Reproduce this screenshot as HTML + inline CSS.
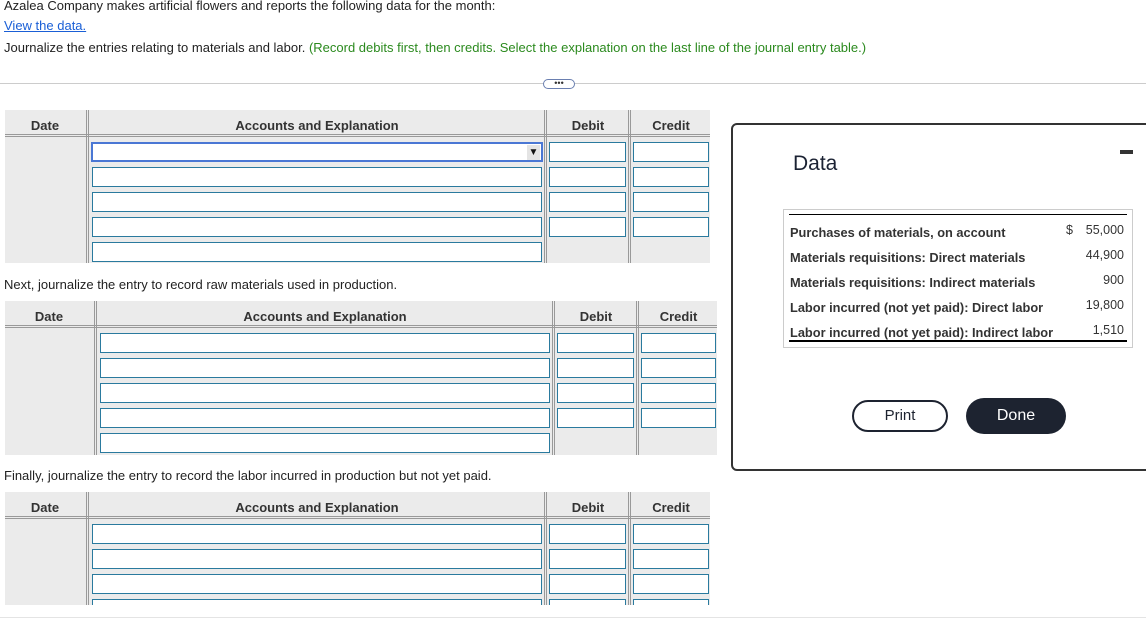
<!DOCTYPE html>
<html><head><style>
*{margin:0;padding:0;box-sizing:border-box}
body{width:1146px;height:619px;position:relative;overflow:hidden;background:#fff;font-family:"Liberation Sans",Arial,sans-serif;color:#222;font-size:13px}
.a{position:absolute}
.hd{position:absolute;background:#ebebeb}
.th{position:absolute;font-weight:bold;font-size:13px;color:#333;text-align:center}
.in{position:absolute;background:#fff;border:1px solid #2a7a9e;height:20px}
.vl{position:absolute;width:3px;border-left:1px solid #999;border-right:1px solid #999}
.hl{position:absolute;height:3px;border-top:1px solid #999;border-bottom:1px solid #999}
.dt{position:absolute;left:790px;font-weight:bold;font-size:12.8px;color:#333}
.dv{position:absolute;right:22px;font-size:12.5px;color:#333;text-align:right}
</style></head><body>
<div class="a" style="left:4px;top:-2px;font-size:13px">Azalea Company makes artificial flowers and reports the following data for the month:</div>
<div class="a" style="left:4px;top:18px;font-size:13px;color:#1a5fd6;text-decoration:underline">View the data.</div>
<div class="a" style="left:4px;top:40px;font-size:13px">Journalize the entries relating to materials and labor. <span style="color:#2b8a1e">(Record debits first, then credits. Select the explanation on the last line of the journal entry table.)</span></div>
<div class="a" style="left:0;top:83px;width:1146px;height:1px;background:#ccc"></div>
<div class="a" style="left:543px;top:79px;width:32px;height:10px;border:1px solid #6a7fb0;border-radius:5px;background:#fff;font-size:9px;line-height:6px;text-align:center;color:#333">•••</div>

<!-- Table 1 -->
<div class="hd" style="left:5px;top:110px;width:705px;height:153px"></div>
<div class="hl" style="left:5px;top:134px;width:705px"></div>
<div class="vl" style="left:86px;top:110px;height:153px"></div>
<div class="vl" style="left:544px;top:110px;height:153px"></div>
<div class="vl" style="left:628px;top:110px;height:153px"></div>
<div class="th" style="left:5px;top:118px;width:80px">Date</div>
<div class="th" style="left:90px;top:118px;width:454px">Accounts and Explanation</div>
<div class="th" style="left:548px;top:118px;width:80px">Debit</div>
<div class="th" style="left:632px;top:118px;width:78px">Credit</div>
<div class="in" style="left:91px;top:142px;width:452px;border:2px solid #4a77d4"></div>
<div class="a" style="left:527px;top:145px;width:13px;height:15px;background:#e4e4e4;font-size:10px;text-align:center;line-height:15px;color:#111">▼</div>
<div class="in" style="left:92px;top:167px;width:450px"></div>
<div class="in" style="left:92px;top:192px;width:450px"></div>
<div class="in" style="left:92px;top:217px;width:450px"></div>
<div class="in" style="left:92px;top:242px;width:450px"></div>
<div class="in" style="left:549px;top:142px;width:77px"></div>
<div class="in" style="left:549px;top:167px;width:77px"></div>
<div class="in" style="left:549px;top:192px;width:77px"></div>
<div class="in" style="left:549px;top:217px;width:77px"></div>
<div class="in" style="left:633px;top:142px;width:76px"></div>
<div class="in" style="left:633px;top:167px;width:76px"></div>
<div class="in" style="left:633px;top:192px;width:76px"></div>
<div class="in" style="left:633px;top:217px;width:76px"></div>

<div class="a" style="left:4px;top:277px">Next, journalize the entry to record raw materials used in production.</div>

<!-- Table 2 -->
<div class="hd" style="left:5px;top:301px;width:712px;height:154px"></div>
<div class="hl" style="left:5px;top:325px;width:712px"></div>
<div class="vl" style="left:94px;top:301px;height:154px"></div>
<div class="vl" style="left:552px;top:301px;height:154px"></div>
<div class="vl" style="left:636px;top:301px;height:154px"></div>
<div class="th" style="left:5px;top:309px;width:88px">Date</div>
<div class="th" style="left:98px;top:309px;width:454px">Accounts and Explanation</div>
<div class="th" style="left:556px;top:309px;width:80px">Debit</div>
<div class="th" style="left:640px;top:309px;width:77px">Credit</div>
<div class="in" style="left:100px;top:333px;width:450px"></div>
<div class="in" style="left:100px;top:358px;width:450px"></div>
<div class="in" style="left:100px;top:383px;width:450px"></div>
<div class="in" style="left:100px;top:408px;width:450px"></div>
<div class="in" style="left:100px;top:433px;width:450px"></div>
<div class="in" style="left:557px;top:333px;width:77px"></div>
<div class="in" style="left:557px;top:358px;width:77px"></div>
<div class="in" style="left:557px;top:383px;width:77px"></div>
<div class="in" style="left:557px;top:408px;width:77px"></div>
<div class="in" style="left:641px;top:333px;width:75px"></div>
<div class="in" style="left:641px;top:358px;width:75px"></div>
<div class="in" style="left:641px;top:383px;width:75px"></div>
<div class="in" style="left:641px;top:408px;width:75px"></div>

<div class="a" style="left:4px;top:468px">Finally, journalize the entry to record the labor incurred in production but not yet paid.</div>

<!-- Table 3 -->
<div class="hd" style="left:5px;top:492px;width:705px;height:113px"></div>
<div class="hl" style="left:5px;top:516px;width:705px"></div>
<div class="vl" style="left:86px;top:492px;height:113px"></div>
<div class="vl" style="left:544px;top:492px;height:113px"></div>
<div class="vl" style="left:628px;top:492px;height:113px"></div>
<div class="th" style="left:5px;top:500px;width:80px">Date</div>
<div class="th" style="left:90px;top:500px;width:454px">Accounts and Explanation</div>
<div class="th" style="left:548px;top:500px;width:80px">Debit</div>
<div class="th" style="left:632px;top:500px;width:78px">Credit</div>
<div class="in" style="left:92px;top:524px;width:450px"></div>
<div class="in" style="left:92px;top:549px;width:450px"></div>
<div class="in" style="left:92px;top:574px;width:450px"></div>
<div class="in" style="left:92px;top:599px;width:450px"></div>
<div class="in" style="left:549px;top:524px;width:77px"></div>
<div class="in" style="left:549px;top:549px;width:77px"></div>
<div class="in" style="left:549px;top:574px;width:77px"></div>
<div class="in" style="left:549px;top:599px;width:77px"></div>
<div class="in" style="left:633px;top:524px;width:76px"></div>
<div class="in" style="left:633px;top:549px;width:76px"></div>
<div class="in" style="left:633px;top:574px;width:76px"></div>
<div class="in" style="left:633px;top:599px;width:76px"></div>
<div class="a" style="left:0;top:605px;width:1146px;height:14px;background:#fff"></div>
<div class="a" style="left:0;top:617px;width:1146px;height:1px;background:#e4e4e4"></div>

<!-- Modal -->
<div class="a" style="left:731px;top:123px;width:430px;height:348px;border:2px solid #333;border-radius:6px;background:#fff"></div>
<div class="a" style="left:793px;top:152px;font-size:21px;color:#1b2233">Data</div>
<div class="a" style="left:1120px;top:150px;width:13px;height:4px;background:#333"></div>
<div class="a" style="left:783px;top:209px;width:350px;height:139px;border:1px solid #ccc"></div>
<div class="a" style="left:789px;top:214px;width:338px;height:1px;background:#000"></div>
<div class="a" style="left:789px;top:340px;width:338px;height:2px;background:#000"></div>
<div class="dt" style="top:225px">Purchases of materials, on account</div>
<div class="dt" style="top:250px">Materials requisitions: Direct materials</div>
<div class="dt" style="top:275px">Materials requisitions: Indirect materials</div>
<div class="dt" style="top:300px">Labor incurred (not yet paid): Direct labor</div>
<div class="dt" style="top:325px">Labor incurred (not yet paid): Indirect labor</div>
<div class="a" style="left:1066px;top:223px;font-size:12.5px;color:#333">$</div>
<div class="dv" style="top:223px">55,000</div>
<div class="dv" style="top:248px">44,900</div>
<div class="dv" style="top:273px">900</div>
<div class="dv" style="top:298px">19,800</div>
<div class="dv" style="top:323px">1,510</div>
<div class="a" style="left:852px;top:400px;width:96px;height:32px;border:2px solid #1d2330;border-radius:16px;text-align:center;line-height:28px;font-size:15px;color:#1d2330">Print</div>
<div class="a" style="left:966px;top:398px;width:100px;height:36px;background:#1d2330;border-radius:18px;text-align:center;line-height:36px;font-size:16px;color:#fff">Done</div>
</body></html>
